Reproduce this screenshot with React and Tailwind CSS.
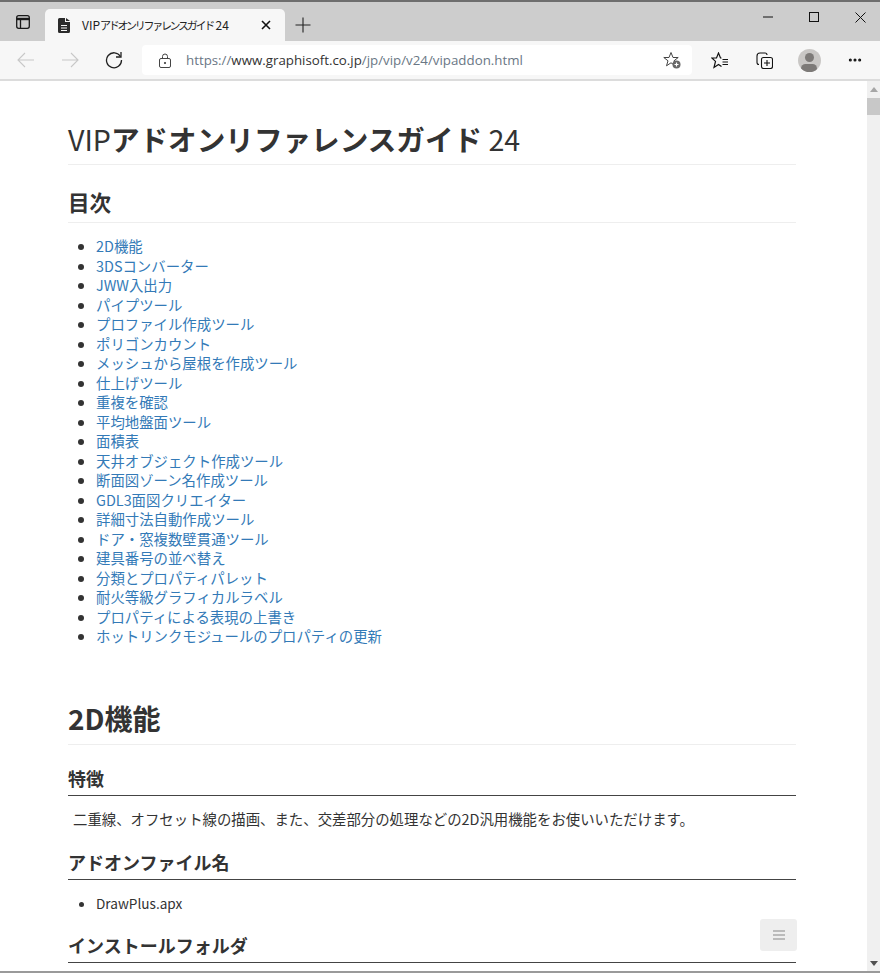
import React from "react";
import { FiMoreHorizontal } from "react-icons/fi";

const links = [
  "2D機能",
  "3DSコンバーター",
  "JWW入出力",
  "パイプツール",
  "プロファイル作成ツール",
  "ポリゴンカウント",
  "メッシュから屋根を作成ツール",
  "仕上げツール",
  "重複を確認",
  "平均地盤面ツール",
  "面積表",
  "天井オブジェクト作成ツール",
  "断面図ゾーン名作成ツール",
  "GDL3面図クリエイター",
  "詳細寸法自動作成ツール",
  "ドア・窓複数壁貫通ツール",
  "建具番号の並べ替え",
  "分類とプロパティパレット",
  "耐火等級グラフィカルラベル",
  "プロパティによる表現の上書き",
  "ホットリンクモジュールのプロパティの更新",
];

const font = "font-['Noto_Sans_CJK_JP','Noto_Sans',sans-serif]";

const Section = ({ title, children }) => (
  <>
    <h4 className="mt-[18px] h-[32px] border-b border-[#444] text-[18px] font-bold leading-[29px] text-[#333]">
      {title}
    </h4>
    {children}
  </>
);

const TabStrip = () => (
  <div className="flex h-[41px] items-end border-t-2 border-[#6e6e6e] bg-[#cdcdcd]">
    <div className="flex h-[39px] w-[45px] items-center justify-center pt-[1px]">
      <svg width="16" height="16" viewBox="0 0 16 16" fill="none" stroke="#1a1a1a" strokeWidth="1.3">
        <rect x="1.7" y="1.7" width="12.6" height="12.6" rx="2" />
        <path d="M1.7 5h12.6" strokeWidth="2.4" />
        <path d="M5.5 5v9" />
      </svg>
    </div>
    <div className="flex h-[32px] w-[240px] items-center rounded-t-[5px] bg-[#f7f7f7] pl-[13px]">
      <svg width="12" height="15" viewBox="0 0 12 15" fill="#2b2b2b">
        <path d="M0 1.5A1.5 1.5 0 0 1 1.5 0H7v4h5v9.500A1.500 1.500 0 0 1 10.500 15h-9A1.500 1.500 0 0 1 0 13.500z" />
        <path d="M8 0l4 3H8z" />
        <path d="M3 7h6v1H3zM3 9.500h6v1H3zM3 12h6v1H3z" fill="#f7f7f7" />
      </svg>
      <span className="ml-[12px] w-[179px] whitespace-nowrap text-[12px] text-[#222]">
        VIP<span className="text-[11px] tracking-[-2.3px]">アドオンリファレンスガイド</span> 24
      </span>
      <svg width="10" height="10" viewBox="0 0 10 10" stroke="#111" strokeWidth="1.6">
        <path d="M1 1l8 8M9 1l-8 8" />
      </svg>
    </div>
    <div className="flex h-[32px] w-[36px] items-center justify-center">
      <svg width="16" height="16" viewBox="0 0 16 16" stroke="#222" strokeWidth="1.1">
        <path d="M8 0.500v15M0.500 8h15" />
      </svg>
    </div>
    <div className="flex h-[39px] flex-1 items-start justify-end">
      <div className="flex h-[30px] w-[46px] translate-x-[3px] items-center justify-center">
        <svg width="10" height="2" stroke="#111"><path d="M0 1h10" /></svg>
      </div>
      <div className="flex h-[30px] w-[46px] translate-x-[3px] items-center justify-center">
        <svg width="10" height="10" fill="none" stroke="#111"><rect x="0.500" y="0.500" width="9" height="9" /></svg>
      </div>
      <div className="flex h-[30px] w-[46px] translate-x-[3px] items-center justify-center">
        <svg width="11" height="11" stroke="#111"><path d="M0.500 0.500l10 10M10.500 0.500l-10 10" /></svg>
      </div>
    </div>
  </div>
);

const Toolbar = () => (
  <div className="flex h-[40px] items-center border-b-2 border-[#dcdcdc] bg-[#f7f7f7]">
    <div className="flex w-[140px] items-center">
      <div className="flex w-[50px] justify-center pl-[2px]">
        <svg width="18" height="16" viewBox="0 0 18 16" fill="none" stroke="#c8c8c8" strokeWidth="1.100">
          <path d="M17 8H1M8 1L1 8l7 7" />
        </svg>
      </div>
      <div className="flex w-[40px] justify-center">
        <svg width="18" height="16" viewBox="0 0 18 16" fill="none" stroke="#c8c8c8" strokeWidth="1.100">
          <path d="M1 8h16M10 1l7 7-7 7" />
        </svg>
      </div>
      <div className="flex w-[48px] justify-center">
        <svg width="18" height="18" viewBox="0 0 18 18" fill="none" stroke="#222" strokeWidth="1.300">
          <path d="M15.500 5.500A7.500 7.500 0 1 0 16.500 9" />
          <path d="M16 1v5h-5" />
        </svg>
      </div>
    </div>
    <div className="ml-[2px] flex h-[30px] w-[550px] items-center rounded-[4px] bg-white pl-[17px]">
      <svg width="12" height="15" viewBox="0 0 12 15" fill="none" stroke="#444">
        <rect x="0.500" y="5.500" width="11" height="9" rx="1.500" />
        <path d="M3.500 5.500V3.500a2.500 2.500 0 0 1 5 0v2" />
        <circle cx="6" cy="10" r="0.700" fill="#444" />
      </svg>
      <span className="ml-[15px] flex-1 whitespace-nowrap pt-[2px] font-['Open_Sans',sans-serif] text-[13.3px] text-[#6a7785]">
        https://<span className="text-[#333]">www.graphisoft.co.jp</span>/jp/vip/v24/vipaddon.html
      </span>
      <svg className="mr-[10px]" width="20" height="20" viewBox="0 0 20 20" fill="none">
        <path d="M9 2.500l2 5h5.200l-4.200 3.300 1.500 5-4.500-3-4.500 3 1.500-5L1.800 7.500H7z" stroke="#444" strokeWidth="1" />
        <circle cx="14.500" cy="14.500" r="4" fill="#666" />
        <path d="M14.500 12.500v4M12.500 14.500h4" stroke="#fff" strokeWidth="1.200" />
      </svg>
    </div>
    <div className="flex flex-1 items-center">
      <div className="flex w-[55px] justify-center">
        <svg width="18" height="17" viewBox="0 0 18 17" fill="none" stroke="#111" strokeWidth="1.200">
          <path d="M10.500 6H9.500L7.500 1 5.500 6H0.800l3.700 3.400L3 15.500l4.500-3 3 2" />
          <path d="M11.500 7.500H17M11.500 10H17M11.500 12.500H17" />
        </svg>
      </div>
      <div className="flex w-[34px] justify-center">
        <svg width="17" height="17" viewBox="0 0 17 17" fill="none" stroke="#111" strokeWidth="1.100">
          <path d="M3 12.500A2 2 0 0 1 1 10.500V4a3 3 0 0 1 3-3h5a2 2 0 0 1 2 2" />
          <rect x="5.500" y="5.500" width="11" height="11" rx="2" />
          <path d="M11 8v6M8 11h6" />
        </svg>
      </div>
      <div className="flex w-[56px] justify-center">
        <div className="relative h-[23px] w-[23px] overflow-hidden rounded-full bg-[#c9c7c5]">
          <div className="mx-auto mt-[4px] h-[9px] w-[9px] rounded-full bg-[#7d7a78]" />
          <div className="mx-auto mt-[2px] h-[9px] w-[16px] rounded-full bg-[#7d7a78]" />
        </div>
      </div>
      <div className="flex w-[35px] justify-center">
        <FiMoreHorizontal className="text-[#111]" size={16} strokeWidth={2.600} />
      </div>
    </div>
  </div>
);

const Scrollbar = () => (
  <div className="flex w-[13px] flex-col items-center bg-[#f0f0f0]">
    <div className="mt-[6px] h-0 w-0 border-x-[4px] border-b-[5px] border-x-transparent border-b-[#a6a6a6]" />
    <div className="mt-[6px] h-[17px] w-full bg-[#c8c8c8]" />
    <div className="mt-auto mb-[5px] h-0 w-0 border-x-[4px] border-t-[5px] border-x-transparent border-t-[#505050]" />
  </div>
);

const App = () => {
  return (
    <div className={`relative flex h-[973px] w-[880px] flex-col overflow-hidden bg-white ${font}`}>
      <TabStrip />
      <Toolbar />
      <div className="flex min-h-0 flex-1">
        <main className="min-w-0 flex-1 overflow-hidden pl-[68px] pr-[71px] pt-[38px]">
          <h1 className="h-[46px] border-b border-[#eee] text-[28.6px] leading-[40px] text-[#333]">
            VIP<span className="font-bold">アドオンリファレンスガイド</span> 24
          </h1>
          <h2 className="mt-[24px] h-[34px] border-b border-[#eee] text-[21.6px] font-bold leading-[25px] text-[#333]">
            目次
          </h2>
          <ul className="mt-[13px] list-disc pl-[28px] text-[14.4px] leading-[19.5px] text-[#333]">
            {links.map((l) => (
              <li key={l}>
                <a className="text-[#337ab7]">{l}</a>
              </li>
            ))}
          </ul>
          <h1 className="mb-[19px] mt-[53px] h-[46px] border-b border-[#eee] text-[28px] font-bold leading-[38px] text-[#333]">
            2D機能
          </h1>
          <Section title="特徴">
            <p className="mt-[13px] h-[21px] pl-[5px] text-[14.4px] leading-[20px] text-[#333]">
              二重線、オフセット線の描画、また、交差部分の処理などの2D汎用機能をお使いいただけます。
            </p>
          </Section>
          <Section title="アドオンファイル名">
            <ul className="mt-[13px] list-disc pl-[28px] text-[13.6px] leading-[20px] text-[#333]">
              <li>DrawPlus.apx</li>
            </ul>
          </Section>
          <Section title="インストールフォルダ" />
        </main>
        <Scrollbar />
      </div>
      <div className="h-[2px] bg-[#9a9a9a]" />
      <div className="absolute left-[760px] top-[919px] flex h-[32px] w-[37px] items-center justify-center rounded-[3px] bg-[#eee]">
        <svg width="12" height="10" fill="#bbb">
          <path d="M0 0h12v2H0zM0 4h12v2H0zM0 8h12v2H0z" />
        </svg>
      </div>
    </div>
  );
};

export default App;
